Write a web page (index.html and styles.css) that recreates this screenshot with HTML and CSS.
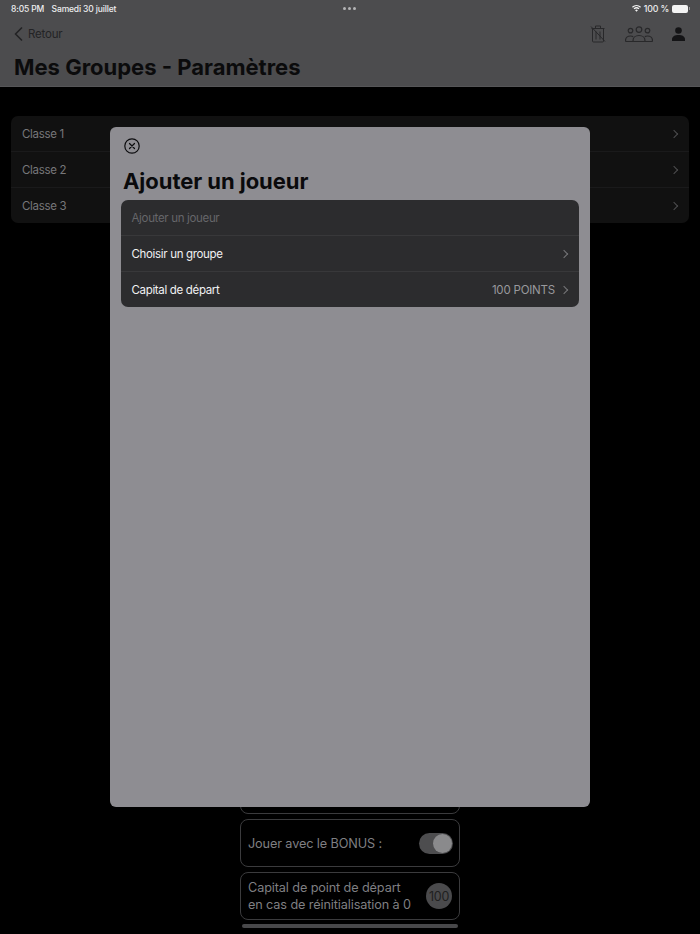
FILE: index.html
```html
<!DOCTYPE html>
<html lang="fr">
<head>
  <meta charset="UTF-8" />
  <title>Mes Groupes - Paramètres</title>
  <link rel="stylesheet" href="styles.css">
</head>
<body>
  <div class="screen">
    <header class="topbar">
      <div class="status">
        <div class="status-left"><span>8:05 PM</span><span>Samedi 30 juillet</span></div>
        <div class="status-dots"><i></i><i></i><i></i></div>
        <div class="status-right">
          <svg class="wifi" width="9" height="7" viewBox="0 0 11 8"><path d="M5.5 8 3.8 6a2.5 2.5 0 0 1 3.4 0zM2.9 5 1.9 3.9a5.4 5.4 0 0 1 7.2 0L8.1 5a4 4 0 0 0-5.2 0zM1 3 0 1.9a8.2 8.2 0 0 1 11 0L10 3a6.8 6.8 0 0 0-9 0z" fill="#f2f2f2"/></svg>
          <span>100 %</span>
          <span class="battery"><b></b></span>
        </div>
      </div>
      <div class="navrow">
        <a class="back">
          <svg width="9" height="14" viewBox="0 0 9 14"><path d="M7.5 1 1.5 7l6 6" fill="none" stroke="#232325" stroke-width="1.7" stroke-linecap="round" stroke-linejoin="round"/></svg>
          Retour
        </a>
        <div class="nav-icons">
          <svg width="16" height="18" viewBox="0 0 16 18" fill="none" stroke="#28282a" stroke-width="1"><path d="M1.5 3.500h13M5.500 3.500V1h5v2.500M2.500 3.500v12.500a1 1 0 0 0 1 1h9a1 1 0 0 0 1-1V3.500M6 6.500v8M10 6.500v8M1 1.500l14 15"/></svg>
          <svg width="28" height="16" viewBox="0 0 28 16" fill="none" stroke="#28282a" stroke-width="1.200"><circle cx="14" cy="3.600" r="2.800"/><circle cx="5.500" cy="4.600" r="2.300"/><circle cx="22.500" cy="4.600" r="2.300"/><path d="M8 14.500c0-3 2.600-5 6-5s6 2 6 5c0 .6-.4 1-1 1H9c-.6 0-1-.4-1-1z"/><path d="M8 15.500H1.500c-.6 0-1-.4-1-1 0-2.600 2.200-4.500 5-4.500 1 0 1.900.2 2.700.6M20 15.500h6.500c.6 0 1-.4 1-1 0-2.600-2.200-4.500-5-4.500-1 0-1.900.2-2.700.6"/></svg>
          <svg width="13" height="14" viewBox="0 0 13 14" fill="#141416"><circle cx="6.500" cy="3.500" r="3.300"/><path d="M0 12.200C0 9.500 3 8 6.500 8S13 9.500 13 12.200V14H0z"/></svg>
        </div>
      </div>
      <h1>Mes Groupes - Paramètres</h1>
    </header>

    <main class="content">
      <ul class="groups">
        <li>Classe 1<span class="chev"></span></li>
        <li>Classe 2<span class="chev"></span></li>
        <li>Classe 3<span class="chev"></span></li>
      </ul>

      <div class="settings">
        <div class="card card-cut"></div>
        <div class="card">
          <span>Jouer avec le BONUS :</span>
          <span class="switch"><i></i></span>
        </div>
        <div class="card">
          <span>Capital de point de départ<br>en cas de réinitialisation à 0</span>
          <span class="badge">100</span>
        </div>
        <div class="scrollbar"></div>
      </div>
    </main>

    <section class="modal">
      <svg class="close" width="16" height="16" viewBox="0 0 16 16" fill="none" stroke="#0c0c0e" stroke-width="1.200"><circle cx="8" cy="8" r="7.200"/><path d="M5.500 5.500l5 5M10.500 5.500l-5 5" stroke-linecap="round"/></svg>
      <h2>Ajouter un joueur</h2>
      <ul class="form">
        <li class="placeholder">Ajouter un joueur</li>
        <li>Choisir un groupe<span class="chev"></span></li>
        <li>Capital de départ<span class="value">100 POINTS</span><span class="chev"></span></li>
      </ul>
    </section>
  </div>
</body>
</html>
```

FILE: styles.css
```css
* { box-sizing: border-box; }
body { margin: 0; background: #000; font-family: Inter, "Liberation Sans", sans-serif; }
ul { list-style: none; margin: 0; padding: 0; }
.screen { position: relative; width: 700px; height: 934px; overflow: hidden; display: flex; flex-direction: column; }

.topbar { height: 87px; background: #4c4c4e; border-bottom: 1px solid #565658; padding: 0 14px; flex: none; }
.status { height: 17px; margin: 0 -3px; display: flex; align-items: center; justify-content: space-between; font-size: 8.500px; letter-spacing: -0.150px; color: #eee; font-weight: 500; position: relative; }
.status-left { display: flex; gap: 7.500px; }
.status-dots { position: absolute; left: 50%; margin-left: -7px; display: flex; gap: 2px; }
.status-dots i { width: 3px; height: 3px; border-radius: 50%; background: #b4b4b6; }
.status-right { display: flex; align-items: center; gap: 3px; font-size: 8.800px; }
.battery { width: 16px; height: 8px; background: #f4f4f4; border-radius: 2px; margin-right: 1px; position: relative; }
.battery b { position: absolute; right: -2px; top: 2.500px; width: 1px; height: 3px; background: #99999b; }

.navrow { height: 33px; display: flex; align-items: center; justify-content: space-between; }
.back { display: flex; align-items: center; gap: 5px; font-size: 11.500px; letter-spacing: -0.200px; color: #232325; }
.nav-icons { display: flex; align-items: center; gap: 19px; margin-right: 1px; }
h1 { margin: 3px 0 0; font-size: 22px; line-height: 28px; font-weight: 700; color: #0b0b0c; }

.content { flex: 1; display: flex; flex-direction: column; justify-content: space-between; padding: 29px 11px 6px; }
.groups { background: #111; border-radius: 7px; }
.groups li { height: 36px; padding: 0 11px; display: flex; align-items: center; justify-content: space-between; font-size: 11.500px; letter-spacing: -0.330px; color: #77777a; border-bottom: 1px solid #1a1a1b; }
.groups li:last-child { height: 35px; border-bottom: 0; }
.chev { width: 6px; height: 6px; border-top: 1px solid #4e4e50; border-right: 1px solid #4e4e50; transform: rotate(45deg); margin-right: 1px; flex: none; }

.settings { width: 220px; align-self: center; display: flex; flex-direction: column; gap: 5px; }
.card { height: 48px; border: 1px solid #3b3b3d; border-radius: 8px; padding: 0 6px 0 7px; display: flex; align-items: center; justify-content: space-between; font-size: 12.700px; line-height: 17px; letter-spacing: -0.120px; color: #7f7f82; }
.card-cut { height: 20px; margin-top: -20px; }
.switch { width: 34px; height: 21px; border-radius: 11px; background: #4d4d4f; position: relative; }
.switch i { position: absolute; right: 1px; top: 1px; width: 19px; height: 19px; border-radius: 50%; background: #8a8a8c; }
.badge { width: 26px; height: 26px; margin-right: 1px; border-radius: 50%; background: #4a4a4c; color: #1f1f20; font-size: 12.500px; letter-spacing: -0.300px; display: flex; align-items: center; justify-content: center; }
.scrollbar { height: 4px; margin: -1px 2px 0; border-radius: 2px; background: #48484a; }

.modal { position: absolute; left: 110px; top: 127px; width: 480px; height: 680px; background: #8e8d92; border-radius: 6px; padding: 11px; }
.close { display: block; margin-left: 3px; }
h2 { margin: 13px 0 0 2px; font-size: 22px; line-height: 28px; font-weight: 700; letter-spacing: -0.050px; color: #0a0a0c; }
.form { margin-top: 5px; background: #2c2c2e; border-radius: 7px; }
.form li { height: 36px; padding: 0 11px 0 10.500px; display: flex; align-items: center; font-size: 11.500px; letter-spacing: -0.330px; color: #f1f1f3; border-bottom: 1px solid #38383a; }
.form li:last-child { height: 35px; border-bottom: 0; }
.form .placeholder { padding-top: 1px; color: #66666a; }
.form .value { margin-left: auto; margin-right: 6px; letter-spacing: -0.200px; color: #99999d; }
.form li > .chev { border-color: #77777a; }
.form li:nth-child(2) > .chev { margin-left: auto; }
```
